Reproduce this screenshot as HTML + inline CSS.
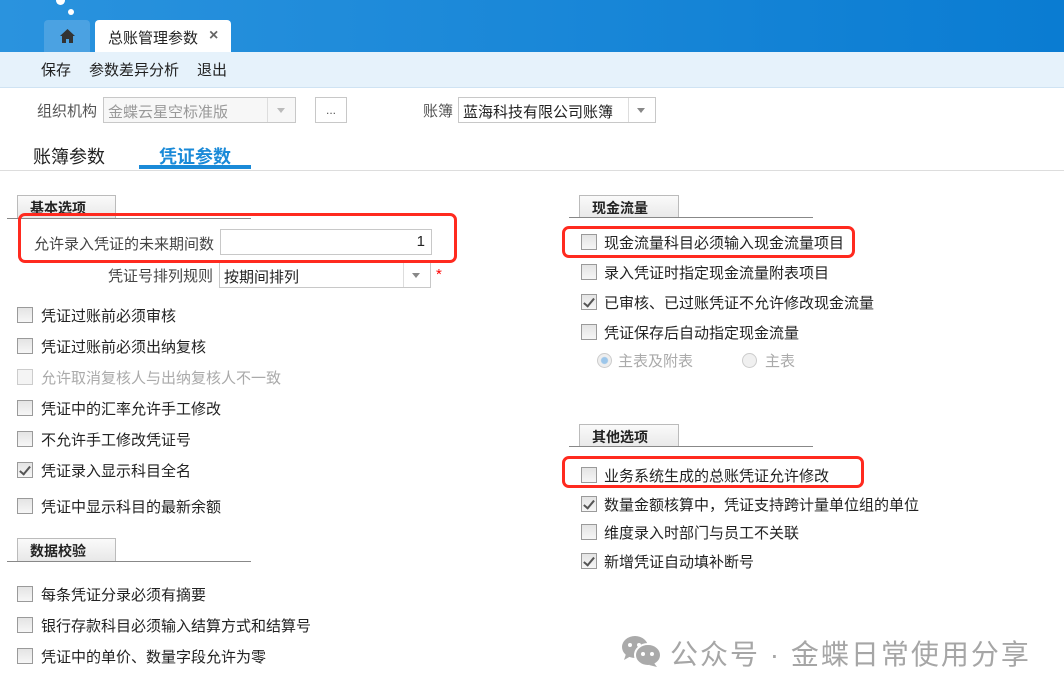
<!DOCTYPE html>
<html><head><meta charset="utf-8"><style>
*{margin:0;padding:0;box-sizing:border-box}
body{width:1064px;height:694px;background:#fff;position:relative;overflow:hidden;font-family:"Liberation Sans","Microsoft YaHei","Noto Sans CJK SC",sans-serif;font-size:15px;color:#222}
.a{position:absolute;white-space:nowrap}
.hdr{left:0;top:0;width:1064px;height:52px;background:linear-gradient(90deg,#2a93de,#0a7cd2)}
.tb{left:0;top:52px;width:1064px;height:36px;background:#e6f2fb;border-bottom:1px solid #cfe3f3}
.cb{position:absolute;width:16px;height:16px;border:1px solid #9a9a9a;background:linear-gradient(#e4e4e4,#f6f6f6)}
.ck::after{content:"";position:absolute;left:4px;top:1px;width:4px;height:9px;border:solid #555;border-width:0 2px 2px 0;transform:rotate(40deg)}
.sh{position:absolute;height:23px;border:1px solid #bbb;border-bottom:none;background:linear-gradient(#fafafa,#e8e8e8);font-weight:bold;font-size:14px;padding:2px 0 0 12px}
.ln{position:absolute;height:1px;background:#888}
.red{position:absolute;border:3px solid #ff2a1f;border-radius:7px}
.in{position:absolute;border:1px solid #c8c8c8;background:#fff;height:26px;padding:3px 4px}
.ar{position:absolute;width:0;height:0;border-left:4px solid transparent;border-right:4px solid transparent;border-top:5px solid #888}
</style></head><body>
<div class="a hdr"></div>
<div class="a" style="left:56px;top:-4px;width:9px;height:9px;border-radius:50%;background:#fff"></div>
<div class="a" style="left:68px;top:9px;width:6px;height:6px;border-radius:50%;background:#fff"></div>
<div class="a" style="left:44px;top:20px;width:46px;height:32px;background:#4ba2e2;border-radius:4px 4px 0 0"></div>
<svg class="a" style="left:60px;top:29px" width="15" height="14" viewBox="0 0 15 14"><path d="M7.5 0L0 7h2v7h4v-4h3v4h4V7h2z" fill="#333"/></svg>
<div class="a" style="left:95px;top:20px;width:136px;height:32px;background:#fff;border-radius:4px 4px 0 0"></div>
<div class="a" style="left:108px;top:27px;font-size:15px;color:#222">总账管理参数</div>
<div class="a" style="left:209px;top:27px;font-size:16px;color:#666;font-weight:bold">×</div>
<div class="a tb"></div>
<div class="a" style="left:41px;top:59px">保存</div>
<div class="a" style="left:89px;top:59px">参数差异分析</div>
<div class="a" style="left:197px;top:59px">退出</div>

<div class="a" style="left:37px;top:100px;color:#555">组织机构</div>
<div class="in" style="left:103px;top:97px;width:193px;color:#999;background:#f7f7f7">金蝶云星空标准版</div>
<div class="a" style="left:267px;top:98px;width:1px;height:24px;background:#ddd"></div>
<div class="ar" style="left:277px;top:108px;border-top-color:#bbb"></div>
<div class="in" style="left:315px;top:97px;width:32px;text-align:center;color:#555;padding-top:5px;font-size:12px">...</div>
<div class="a" style="left:423px;top:100px;color:#555">账簿</div>
<div class="in" style="left:458px;top:97px;width:198px">蓝海科技有限公司账簿</div>
<div class="a" style="left:628px;top:98px;width:1px;height:24px;background:#ddd"></div>
<div class="ar" style="left:637px;top:108px"></div>

<div class="a" style="left:33px;top:143px;font-size:18px;color:#222">账簿参数</div>
<div class="a" style="left:159px;top:143px;font-size:18px;color:#1a8ad8;font-weight:bold">凭证参数</div>
<div class="a" style="left:139px;top:165px;width:112px;height:4px;background:#1a8ad8"></div>
<div class="a" style="left:0;top:170px;width:1064px;height:1px;background:#ddd"></div>

<div class="sh" style="left:17px;top:195px;width:99px">基本选项</div>
<div class="ln" style="left:7px;top:218px;width:244px"></div>
<div class="a" style="left:34px;top:233px;color:#444">允许录入凭证的未来期间数</div>
<div class="in" style="left:220px;top:229px;width:212px;text-align:right;padding-right:6px;font-size:15px">1</div>
<div class="a" style="left:108px;top:265px;color:#444">凭证号排列规则</div>
<div class="in" style="left:219px;top:262px;width:212px">按期间排列</div>
<div class="a" style="left:403px;top:263px;width:1px;height:24px;background:#ddd"></div>
<div class="ar" style="left:412px;top:273px"></div>
<div class="a" style="left:436px;top:266px;color:#f00">*</div>
<div class="red" style="left:18px;top:213px;width:439px;height:50px"></div>

<div class="cb" style="left:17px;top:307px"></div><div class="a" style="left:41px;top:305px">凭证过账前必须审核</div>
<div class="cb" style="left:17px;top:338px"></div><div class="a" style="left:41px;top:336px">凭证过账前必须出纳复核</div>
<div class="cb" style="left:17px;top:369px;border-color:#ccc;background:#f4f4f4"></div><div class="a" style="left:41px;top:367px;color:#aaa">允许取消复核人与出纳复核人不一致</div>
<div class="cb" style="left:17px;top:400px"></div><div class="a" style="left:41px;top:398px">凭证中的汇率允许手工修改</div>
<div class="cb" style="left:17px;top:431px"></div><div class="a" style="left:41px;top:429px">不允许手工修改凭证号</div>
<div class="cb ck" style="left:17px;top:462px"></div><div class="a" style="left:41px;top:460px">凭证录入显示科目全名</div>
<div class="cb" style="left:17px;top:498px"></div><div class="a" style="left:41px;top:496px">凭证中显示科目的最新余额</div>

<div class="sh" style="left:17px;top:538px;width:99px">数据校验</div>
<div class="ln" style="left:7px;top:561px;width:244px"></div>
<div class="cb" style="left:17px;top:586px"></div><div class="a" style="left:41px;top:584px">每条凭证分录必须有摘要</div>
<div class="cb" style="left:17px;top:617px"></div><div class="a" style="left:41px;top:615px">银行存款科目必须输入结算方式和结算号</div>
<div class="cb" style="left:17px;top:648px"></div><div class="a" style="left:41px;top:646px">凭证中的单价、数量字段允许为零</div>

<div class="sh" style="left:579px;top:195px;width:100px">现金流量</div>
<div class="ln" style="left:569px;top:217px;width:244px"></div>
<div class="cb" style="left:581px;top:234px"></div><div class="a" style="left:604px;top:232px">现金流量科目必须输入现金流量项目</div>
<div class="red" style="left:562px;top:226px;width:293px;height:32px"></div>
<div class="cb" style="left:581px;top:264px"></div><div class="a" style="left:604px;top:262px">录入凭证时指定现金流量附表项目</div>
<div class="cb ck" style="left:581px;top:294px"></div><div class="a" style="left:604px;top:292px">已审核、已过账凭证不允许修改现金流量</div>
<div class="cb" style="left:581px;top:324px"></div><div class="a" style="left:604px;top:322px">凭证保存后自动指定现金流量</div>
<div class="a" style="left:597px;top:353px;width:15px;height:15px;border-radius:50%;border:1px solid #ccc;background:radial-gradient(circle,#9cc6ea 0 3px,#eee 4px)"></div>
<div class="a" style="left:618px;top:350px;color:#aaa">主表及附表</div>
<div class="a" style="left:742px;top:353px;width:15px;height:15px;border-radius:50%;border:1px solid #ccc;background:#f0f0f0"></div>
<div class="a" style="left:765px;top:350px;color:#aaa">主表</div>

<div class="sh" style="left:579px;top:424px;width:100px">其他选项</div>
<div class="ln" style="left:569px;top:446px;width:244px"></div>
<div class="cb" style="left:581px;top:467px"></div><div class="a" style="left:604px;top:465px">业务系统生成的总账凭证允许修改</div>
<div class="red" style="left:562px;top:456px;width:302px;height:32px"></div>
<div class="cb ck" style="left:581px;top:496px"></div><div class="a" style="left:604px;top:494px">数量金额核算中，凭证支持跨计量单位组的单位</div>
<div class="cb" style="left:581px;top:524px"></div><div class="a" style="left:604px;top:522px">维度录入时部门与员工不关联</div>
<div class="cb ck" style="left:581px;top:553px"></div><div class="a" style="left:604px;top:551px">新增凭证自动填补断号</div>

<svg class="a" style="left:620px;top:634px" width="42" height="34" viewBox="0 0 42 34"><ellipse cx="15" cy="13" rx="13" ry="11" fill="#aaa"/><path d="M6 20l-2 6 7-4z" fill="#aaa"/><ellipse cx="28" cy="21" rx="13" ry="11" fill="#aaa" stroke="#fff" stroke-width="2"/><path d="M34 29l3 4-8-2z" fill="#aaa"/><circle cx="10" cy="11" r="2" fill="#fff"/><circle cx="19" cy="11" r="2" fill="#fff"/><circle cx="23" cy="20" r="2" fill="#fff"/><circle cx="32" cy="20" r="2" fill="#fff"/></svg>
<div class="a" style="left:670px;top:633px;font-size:28px;letter-spacing:2px;color:#a6a6a6">公众号 · 金蝶日常使用分享</div>
</body></html>
